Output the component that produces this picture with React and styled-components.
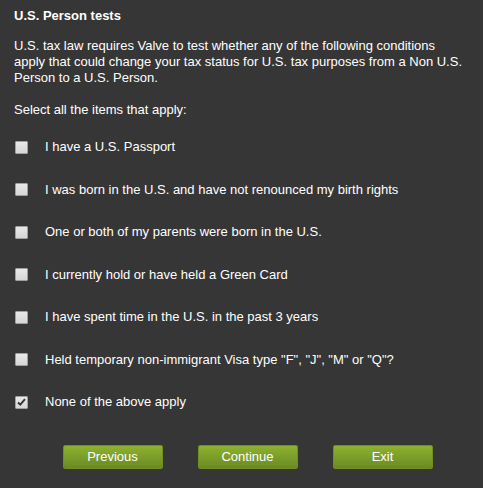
import React, { useState } from "react";
import styled, { createGlobalStyle } from "styled-components";

const GlobalStyle = createGlobalStyle`
  html, body {
    margin: 0;
    padding: 0;
    background: #363636;
  }
  body {
    font-family: "Liberation Sans", Arial, sans-serif;
    color: #ffffff;
  }
`;

const ITEMS = [
  "I have a U.S. Passport",
  "I was born in the U.S. and have not renounced my birth rights",
  "One or both of my parents were born in the U.S.",
  "I currently hold or have held a Green Card",
  "I have spent time in the U.S. in the past 3 years",
  'Held temporary non-immigrant Visa type "F", "J", "M" or "Q"?',
  "None of the above apply",
];

const App = () => {
  const [checked, setChecked] = useState([false, false, false, false, false, false, true]);

  const toggle = (i) => {
    const next = [...checked];
    next[i] = !next[i];
    setChecked(next);
  };

  return (
    <Panel>
      <GlobalStyle />
      <Title>U.S. Person tests</Title>
      <Intro>
        U.S. tax law requires Valve to test whether any of the following conditions
        apply that could change your tax status for U.S. tax purposes from a Non U.S.
        Person to a U.S. Person.
      </Intro>
      <Prompt>Select all the items that apply:</Prompt>
      <List>
        {ITEMS.map((label, i) => (
          <Row key={label} onClick={() => toggle(i)}>
            <Box $on={checked[i]}>
              {checked[i] && (
                <svg width="9" height="8" viewBox="0 0 9 8">
                  <path d="M1 4.5 L3.3 6.6 L8 1.2" fill="none" stroke="#333" strokeWidth="1.9" />
                </svg>
              )}
            </Box>
            <Label>{label}</Label>
          </Row>
        ))}
      </List>
      <Buttons>
        <Button>Previous</Button>
        <Button>Continue</Button>
        <Button>Exit</Button>
      </Buttons>
    </Panel>
  );
};

export default App;

const Panel = styled.div`
  width: 483px;
  height: 488px;
  box-sizing: border-box;
  padding: 8px 14px 0 14px;
  font-size: 13px;
  line-height: 16px;
`;

const Title = styled.div`
  font-weight: bold;
  margin-bottom: 14px;
`;

const Intro = styled.div`
  margin-bottom: 16px;
`;

const Prompt = styled.div`
  margin-bottom: 8px;
`;

const List = styled.div`
  display: flex;
  flex-direction: column;
`;

const Row = styled.div`
  display: flex;
  align-items: center;
  height: 42.5px;
  cursor: pointer;
`;

const Box = styled.span`
  width: 11px;
  height: 11px;
  margin-left: 1px;
  margin-right: 17px;
  border: 1px solid #a0a0a0;
  border-radius: 1px;
  background: linear-gradient(#e8e8e8, #d6d6d6);
  display: flex;
  align-items: center;
  justify-content: center;
`;

const Label = styled.span`
  color: #ffffff;
`;

const Buttons = styled.div`
  display: flex;
  justify-content: center;
  gap: 35px;
  margin-top: 21px;
  padding-left: 12px;
`;

const Button = styled.button`
  width: 100px;
  height: 24px;
  border: 1px solid #6f8f22;
  border-radius: 2px;
  background: linear-gradient(#8db22f, #6a8a23);
  color: #ffffff;
  font-family: "Liberation Sans", Arial, sans-serif;
  font-size: 13px;
  padding: 0;
  cursor: pointer;
`;
